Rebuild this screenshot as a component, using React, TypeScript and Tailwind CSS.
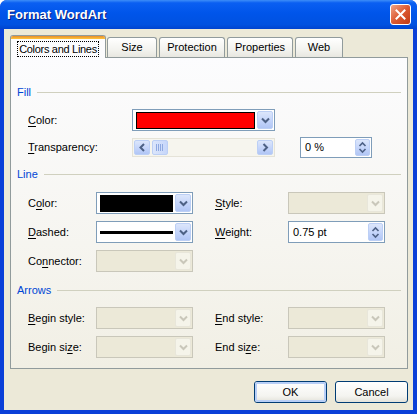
import React from 'react';

const font = "font-['Liberation_Sans',Arial,sans-serif]";

const Chevron = ({ dir = 'down', disabled = false }: { dir?: 'down' | 'left' | 'right'; disabled?: boolean }) => {
  const d = dir === 'down' ? 'M1 1.5 L4.5 5 L8 1.5' : dir === 'left' ? 'M5 1 L1.5 4.5 L5 8' : 'M1.5 1 L5 4.5 L1.5 8';
  const size = dir === 'down' ? { w: 9, h: 7 } : { w: 7, h: 9 };
  return (
    <svg width={size.w} height={size.h} viewBox={`0 0 ${size.w} ${size.h}`}>
      <path d={d} fill="none" stroke={disabled ? '#C9C7BA' : '#4D6185'} strokeWidth="2" />
    </svg>
  );
};

const ArrowBtn = ({ dir = 'down', disabled = false }: { dir?: 'down' | 'left' | 'right'; disabled?: boolean }) => (
  <div
    className={`flex h-full w-[16px] items-center justify-center rounded-[2px] border ${
      disabled
        ? 'border-[#E8E6DA] bg-[#F5F4EA]'
        : 'border-[#BCCFF5] bg-[linear-gradient(to_bottom,#DCE6FB,#C2D3FA_60%,#B1C6F5)]'
    }`}
  >
    <Chevron dir={dir} disabled={disabled} />
  </div>
);

const Combo = ({ className, disabled = false, children }: { className: string; disabled?: boolean; children?: React.ReactNode }) => (
  <div
    className={`flex h-[22px] items-stretch border p-[1px] ${className} ${
      disabled ? 'border-[#C9C7BA] bg-[#ECE9D8]' : 'border-[#7F9DB9] bg-white'
    }`}
  >
    <div className="flex flex-1 items-center px-[2px]">{children}</div>
    <ArrowBtn disabled={disabled} />
  </div>
);

const Spin = ({ className, value }: { className: string; value: string }) => (
  <div className={`flex h-[21px] items-stretch border border-[#7F9DB9] bg-white p-[1px] ${className}`}>
    <div className="flex flex-1 items-center pl-[3px] text-[11px] text-black">{value}</div>
    <div className="flex w-[15px] flex-col items-center justify-center rounded-[2px] border border-[#BCCFF5] bg-[linear-gradient(to_bottom,#DCE6FB,#C2D3FA_60%,#B1C6F5)]">
      <svg width="9" height="13" viewBox="0 0 9 13">
        <path d="M1.5 5 L4.5 2 L7.5 5" fill="none" stroke="#4D6185" strokeWidth="1.6" />
        <path d="M1.5 8 L4.5 11 L7.5 8" fill="none" stroke="#4D6185" strokeWidth="1.6" />
      </svg>
    </div>
  </div>
);

const Label = ({ text, u, className = '' }: { text: string; u: number; className?: string }) => (
  <span className={`text-[11px] text-black ${className}`}>
    {text.slice(0, u)}
    <span className="underline underline-offset-[2px]">{text[u]}</span>
    {text.slice(u + 1)}
  </span>
);

const Section = ({ title, className }: { title: string; className: string }) => (
  <div className={`flex h-[14px] items-center pr-[6px] ${className}`}>
    <span className="text-[11px] text-[#0046D5]">{title}</span>
    <div className="ml-[6px] h-px flex-1 bg-[#D0D0BF]" />
  </div>
);

const Tab = ({ label, w, className = '' }: { label: string; w: string; className?: string }) => (
  <div
    className={`flex h-[20px] items-center justify-center rounded-t-[3px] border border-b-0 border-[#919B9C] bg-[linear-gradient(to_bottom,#FFFFFF,#F3F3EF_60%,#E8E7E0)] text-[11px] text-black ${w} ${className}`}
  >
    {label}
  </div>
);

const XPButton = ({ label, primary = false }: { label: string; primary?: boolean }) => (
  <div className="h-[22px] w-[73px] rounded-[3px] border border-[#003C74] bg-[linear-gradient(to_bottom,#FFFFFF,#F4F4F0_70%,#E3E2DA)]">
    <div
      className={`flex h-full w-full items-center justify-center rounded-[2px] text-[11px] text-black ${
        primary ? 'border-2 border-[#B8CFF7]' : ''
      }`}
    >
      {label}
    </div>
  </div>
);

export default function App() {
  return (
    <div className={`flex h-[414px] w-[417px] flex-col rounded-t-[7px] bg-[#0A3FD8] ${font}`}>
      {/* title bar */}
      <div className="flex h-[29px] items-center rounded-t-[7px] bg-[linear-gradient(to_bottom,#3D8EF8_0%,#0A5FF2_10%,#0055EA_45%,#0051E0_85%,#0043CF_100%)] pl-[7px] pr-[6px]">
        <span className="flex-1 text-[13px] font-bold text-white [text-shadow:1px_1px_0_#0A1E7A]">Format WordArt</span>
        <div className="flex h-[21px] w-[21px] items-center justify-center rounded-[3px] border border-white bg-[linear-gradient(135deg,#F0A488,#DC5A32_50%,#C23A14)]">
          <svg width="11" height="11" viewBox="0 0 11 11">
            <path d="M1.5 1.5 L9.5 9.5 M9.5 1.5 L1.5 9.5" stroke="white" strokeWidth="2" strokeLinecap="square" />
          </svg>
        </div>
      </div>

      {/* body */}
      <div className="mx-[4px] mb-[4px] flex flex-1 flex-col bg-[#ECE9D8] pl-[6px] pr-[5px] pt-[6px]">
        {/* tabs */}
        <div className="relative z-10 flex h-[22px] items-end">
          <div className="-mb-px flex h-[23px] w-[96px] flex-col overflow-hidden rounded-t-[3px] border border-b-0 border-[#919B9C] bg-[#FCFCFE]">
            <div className="h-[3px] bg-[linear-gradient(to_bottom,#E68B2C,#FFC73C)]" />
            <div className="flex flex-1 items-center justify-center">
              <span className="whitespace-nowrap border border-dotted border-black px-[1px] text-[11px] leading-[14px] tracking-[-0.3px] text-black">
                Colors and Lines
              </span>
            </div>
          </div>
          <Tab label="Size" w="w-[50px]" className="ml-[1px]" />
          <Tab label="Protection" w="w-[66px]" className="ml-[2px]" />
          <Tab label="Properties" w="w-[66px]" className="ml-[2px]" />
          <Tab label="Web" w="w-[48px]" className="ml-[2px]" />
        </div>

        {/* panel */}
        <div className="flex h-[312px] flex-col border border-[#919B9C] bg-[linear-gradient(to_bottom,#FCFCFE,#F6F5F0_60%,#F1EFE4)] pl-[6px]">
          <Section title="Fill" className="mt-[27px]" />
          <div className="mt-[10px] flex h-[22px] items-center">
            <Label text="Color:" u={0} className="ml-[11px] w-[104px]" />
            <Combo className="w-[143px]">
              <div className="h-[17px] w-full border border-black bg-[#FF0000]" />
            </Combo>
          </div>
          <div className="mt-[6px] flex h-[21px] items-center">
            <Label text="Transparency:" u={0} className="ml-[11px] w-[104px]" />
            <div className="flex h-[19px] w-[143px] items-stretch border border-[#E5E3D8] bg-[#F6F5EE] px-px py-px">
              <ArrowBtn dir="left" />
              <div className="ml-[2px] flex w-[16px] items-center justify-center rounded-[2px] border border-[#BCCFF5] bg-[linear-gradient(to_right,#DCE6FB,#C6D6FA)]">
                <svg width="8" height="7" viewBox="0 0 8 7">
                  <path d="M0.5 0 V7 M2.5 0 V7 M4.5 0 V7 M6.5 0 V7" stroke="#8EA8E0" strokeWidth="1" />
                </svg>
              </div>
              <div className="flex-1" />
              <ArrowBtn dir="right" />
            </div>
            <Spin value="0 %" className="ml-[25px] w-[72px]" />
          </div>

          <Section title="Line" className="mt-[9px]" />
          <div className="mt-[11px] flex h-[22px] items-center">
            <Label text="Color:" u={1} className="ml-[11px] w-[68px]" />
            <Combo className="w-[97px]">
              <div className="h-[17px] w-full bg-black" />
            </Combo>
            <Label text="Style:" u={0} className="ml-[22px] w-[73px]" />
            <Combo className="w-[97px]" disabled />
          </div>
          <div className="mt-[7px] flex h-[22px] items-center">
            <Label text="Dashed:" u={0} className="ml-[11px] w-[68px]" />
            <Combo className="w-[97px]">
              <div className="h-[3px] w-full bg-black" />
            </Combo>
            <Label text="Weight:" u={0} className="ml-[22px] w-[73px]" />
            <Spin value="0.75 pt" className="h-[22px] w-[97px]" />
          </div>
          <div className="mt-[7px] flex h-[22px] items-center">
            <Label text="Connector:" u={2} className="ml-[11px] w-[68px]" />
            <Combo className="w-[97px]" disabled />
          </div>

          <Section title="Arrows" className="mt-[11px]" />
          <div className="mt-[10px] flex h-[22px] items-center">
            <Label text="Begin style:" u={0} className="ml-[11px] w-[68px]" />
            <Combo className="w-[97px]" disabled />
            <Label text="End style:" u={0} className="ml-[22px] w-[73px]" />
            <Combo className="w-[97px]" disabled />
          </div>
          <div className="mt-[7px] flex h-[22px] items-center">
            <Label text="Begin size:" u={8} className="ml-[11px] w-[68px]" />
            <Combo className="w-[97px]" disabled />
            <Label text="End size:" u={6} className="ml-[22px] w-[73px]" />
            <Combo className="w-[97px]" disabled />
          </div>
        </div>

        {/* buttons */}
        <div className="mt-[12px] flex justify-end gap-[8px]">
          <XPButton label="OK" primary />
          <XPButton label="Cancel" />
        </div>
      </div>
    </div>
  );
}
